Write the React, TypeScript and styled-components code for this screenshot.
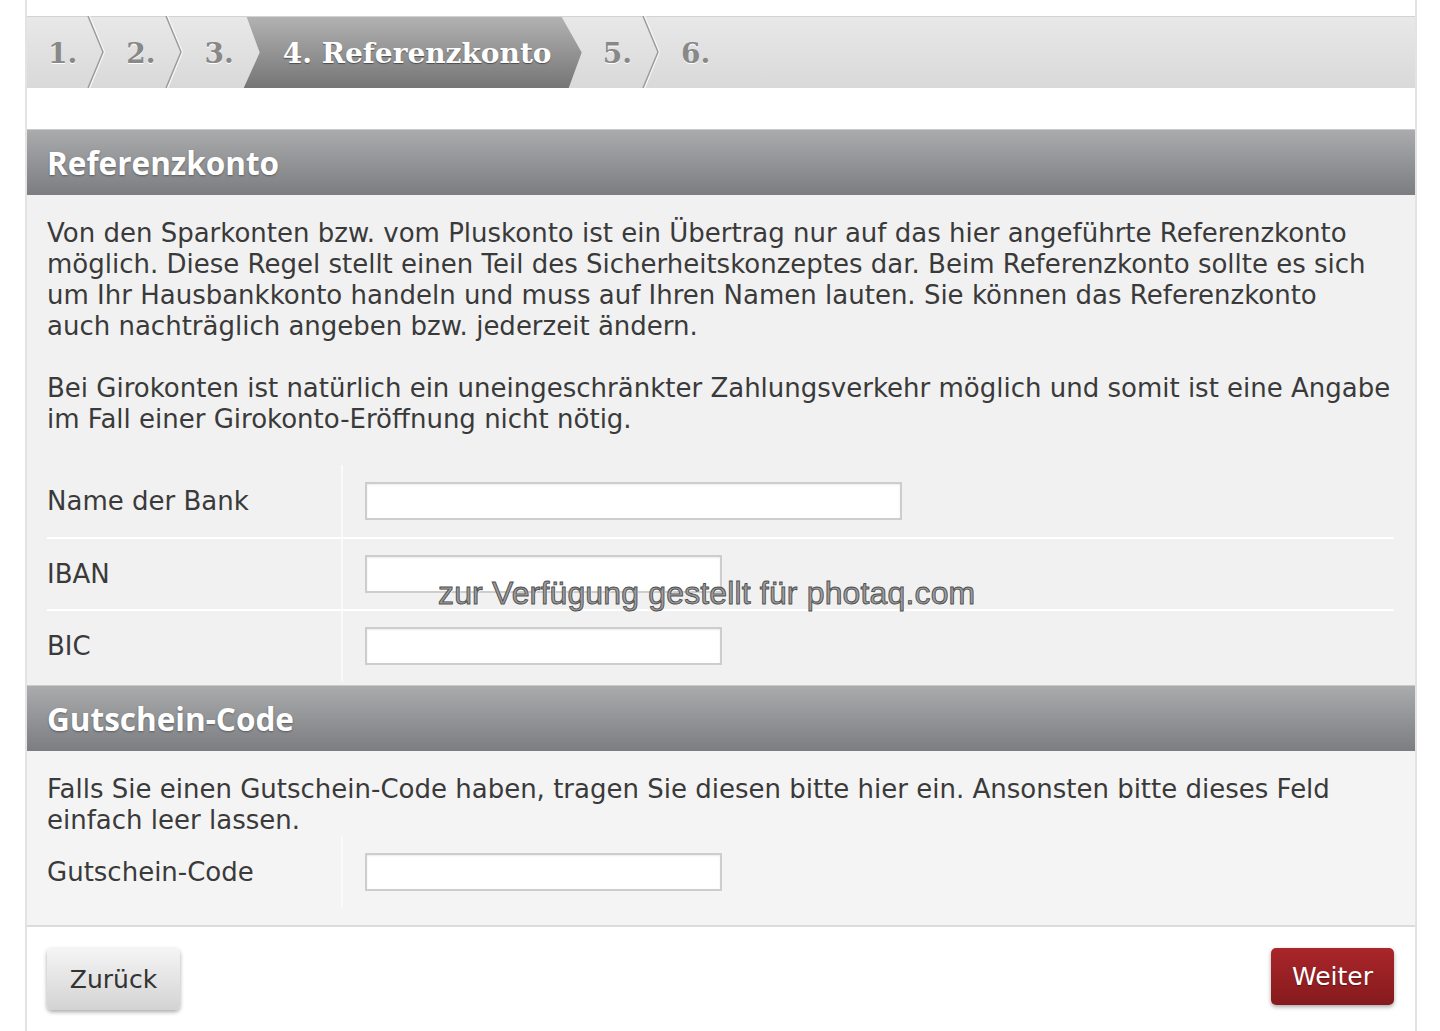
import styled, { createGlobalStyle } from "styled-components";

const GlobalStyle = createGlobalStyle`
    body {
        margin: 0;
        background: #fff;
        font-family: "DejaVu Sans", Verdana, sans-serif;
        color: #3a3a3a;
    }
`;

const Frame = styled.div`
    position: relative;
    margin-left: 25px;
    width: 1388px;
    min-height: 1031px;
    border-left: 2px solid #e3e3e3;
    border-right: 2px solid #e3e3e3;
    background: #fff;
    padding-top: 16px;
    box-sizing: content-box;
`;

const StepBar = styled.div`
    display: flex;
    height: 72px;
    box-sizing: border-box;
    border-top: 1px solid #d3d3d3;
    background: linear-gradient(#e8e8e8, #d9d9d9);
    margin-bottom: 41px;
`;

const Step = styled.div<{ $active?: boolean; $pl: number; $pr: number }>`
    display: flex;
    align-items: center;
    box-sizing: border-box;
    padding: 2px ${p => p.$pr}px 0 ${p => p.$pl}px;
    font-family: "DejaVu Serif", "Liberation Serif", serif;
    font-weight: 700;
    font-size: 28px;
    white-space: nowrap;
    color: ${p => (p.$active ? '#fff' : '#888')};
    text-shadow: ${p => (p.$active ? '0 1px 1px rgba(0,0,0,0.45)' : '0 1px 0 #fff')};
    ${p => p.$active && `
        width: 338px;
        background: linear-gradient(#b2b2b2, #757575);
        clip-path: polygon(3px 0, 318px 0, 338px 50%, 325px 100%, 0 100%, 16px 50%);
    `}
`;

const SepSvg = styled.svg`
    flex: none;
    width: 18px;
    height: 72px;
    margin-top: -1px;
`;

const Sep = () => (
    <SepSvg viewBox="0 0 18 72" preserveAspectRatio="none">
        <polyline points="2.6,0 17.4,36 2.6,72" fill="none" stroke="#f7f7f7" strokeWidth="1.3" />
        <polyline points="1,0 16,36 1,72" fill="none" stroke="#9a9a9a" strokeWidth="1.4" />
    </SepSvg>
);

const SectionTitle = styled.h2`
    margin: 0;
    height: 66px;
    box-sizing: border-box;
    display: flex;
    align-items: center;
    padding: 0 20px;
    border-top: 1px solid #c9c9c9;
    background: linear-gradient(#aaabad, #7b7d80);
    color: #fff;
    font-family: "Open Sans", "DejaVu Sans", sans-serif;
    font-weight: 700;
    font-size: 31.5px;
    text-shadow: 0 1px 2px rgba(0,0,0,0.35);
`;

const SectionBody = styled.div<{ $bg: string; $pb: number }>`
    background: ${p => p.$bg};
    padding: 23px 21px ${p => p.$pb}px 20px;
`;

const Para = styled.p<{ $mb?: number }>`
    margin: 0 0 ${p => p.$mb ?? 0}px;
    font-size: 26px;
    line-height: 31px;
    white-space: nowrap;
`;

const FormRow = styled.div`
    display: grid;
    grid-template-columns: 296px 1fr;
    height: 72px;
    box-sizing: border-box;
    & + & {
        border-top: 2px solid #fff;
    }
`;

const Label = styled.label`
    display: flex;
    align-items: center;
    border-right: 2px solid #fafafa;
    font-size: 26px;
`;

const Field = styled.div`
    display: flex;
    align-items: center;
    padding-left: 22px;
`;

const Input = styled.input<{ $wide?: boolean }>`
    width: ${p => (p.$wide ? 537 : 357)}px;
    height: 38px;
    box-sizing: border-box;
    border: 2px solid #cdcdcd;
    border-radius: 0;
    background: #fff;
    box-shadow: inset 0 1px 2px rgba(0,0,0,0.08);
    outline: none;
`;

const Footer = styled.div`
    display: flex;
    justify-content: space-between;
    align-items: flex-start;
    border-top: 2px solid #dcdcdc;
    padding: 21px 21px 0 20px;
`;

const Button = styled.button<{ $primary?: boolean }>`
    width: ${p => (p.$primary ? 123 : 133)}px;
    height: ${p => (p.$primary ? 57 : 62)}px;
    border: none;
    border-radius: 5px;
    font-family: "DejaVu Sans", sans-serif;
    font-size: 25px;
    cursor: pointer;
    color: ${p => (p.$primary ? '#fff' : '#333')};
    background: ${p => (p.$primary
        ? 'linear-gradient(#aa262a, #851a1d)'
        : 'linear-gradient(#f5f5f5, #d3d3d3)')};
    text-shadow: ${p => (p.$primary ? '0 1px 1px rgba(0,0,0,0.4)' : 'none')};
    box-shadow: 0 2px 4px rgba(0,0,0,0.35);
`;

const Watermark = styled.div`
    position: absolute;
    left: 411px;
    top: 577px;
    font-family: "Liberation Sans", Arial, sans-serif;
    font-size: 32px;
    line-height: 32px;
    letter-spacing: 0.15px;
    white-space: nowrap;
    color: #9c9c9c;
    -webkit-text-stroke: 0.9px #4e4e4e;
    text-shadow: 1px 1px 0 #fff;
    pointer-events: none;
`;

const steps = [
    { text: '1.', pl: 21, pr: 10, sep: true },
    { text: '2.', pl: 21, pr: 10, sep: true },
    { text: '3.', pl: 21, pr: 10, sep: false },
    { text: '4. Referenzkonto', pl: 39, pr: 0, sep: false, active: true },
    { text: '5.', pl: 21, pr: 10, sep: true },
    { text: '6.', pl: 21, pr: 10, sep: false },
];

export default function App() {
    return (
        <>
            <GlobalStyle />
            <Frame>
                <StepBar>
                    {steps.map(s => (
                        <>
                            <Step key={s.text} $active={s.active} $pl={s.pl} $pr={s.pr}>{s.text}</Step>
                            {s.sep && <Sep />}
                        </>
                    ))}
                </StepBar>

                <SectionTitle>Referenzkonto</SectionTitle>
                <SectionBody $bg="#f1f1f1" $pb={4}>
                    <Para $mb={31}>
                        Von den Sparkonten bzw. vom Pluskonto ist ein Übertrag nur auf das hier angeführte Referenzkonto<br />
                        möglich. Diese Regel stellt einen Teil des Sicherheitskonzeptes dar. Beim Referenzkonto sollte es sich<br />
                        um Ihr Hausbankkonto handeln und muss auf Ihren Namen lauten. Sie können das Referenzkonto<br />
                        auch nachträglich angeben bzw. jederzeit ändern.
                    </Para>
                    <Para $mb={30}>
                        Bei Girokonten ist natürlich ein uneingeschränkter Zahlungsverkehr möglich und somit ist eine Angabe<br />
                        im Fall einer Girokonto-Eröffnung nicht nötig.
                    </Para>
                    <FormRow>
                        <Label>Name der Bank</Label>
                        <Field><Input $wide /></Field>
                    </FormRow>
                    <FormRow>
                        <Label>IBAN</Label>
                        <Field><Input /></Field>
                    </FormRow>
                    <FormRow>
                        <Label>BIC</Label>
                        <Field><Input /></Field>
                    </FormRow>
                </SectionBody>

                <SectionTitle>Gutschein-Code</SectionTitle>
                <SectionBody $bg="#f4f4f4" $pb={17}>
                    <Para>
                        Falls Sie einen Gutschein-Code haben, tragen Sie diesen bitte hier ein. Ansonsten bitte dieses Feld<br />
                        einfach leer lassen.
                    </Para>
                    <FormRow>
                        <Label>Gutschein-Code</Label>
                        <Field><Input /></Field>
                    </FormRow>
                </SectionBody>

                <Footer>
                    <Button>Zurück</Button>
                    <Button $primary>Weiter</Button>
                </Footer>

                <Watermark>zur Verfügung gestellt für photaq.com</Watermark>
            </Frame>
        </>
    );
}
